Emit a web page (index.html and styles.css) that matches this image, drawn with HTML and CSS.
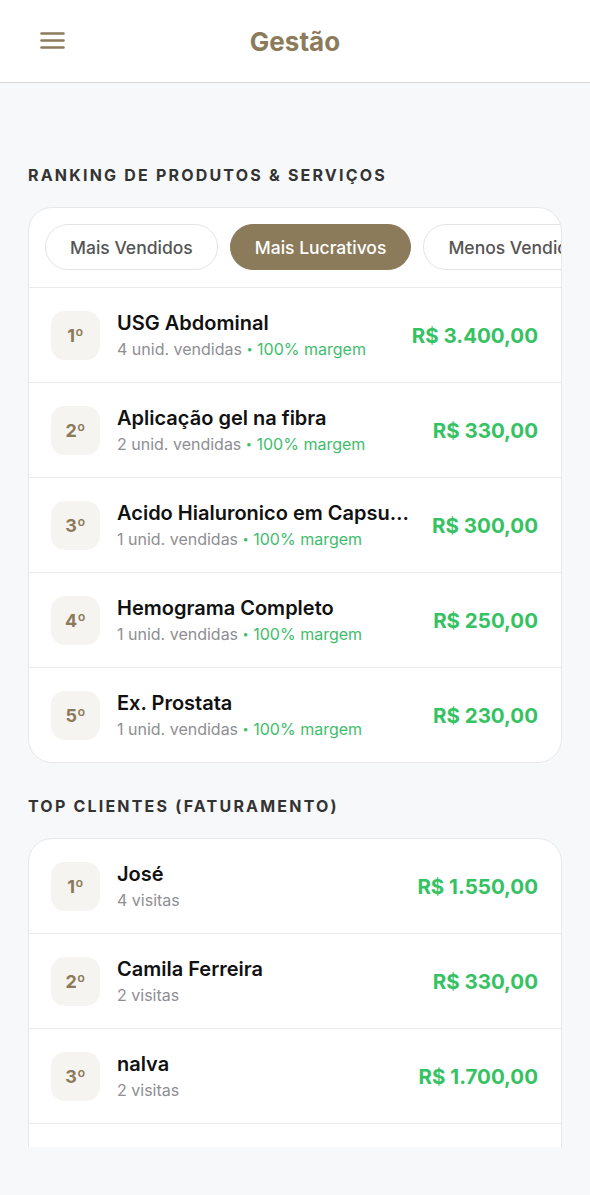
FILE: index.html
```html
<!DOCTYPE html>
<html lang="pt-BR">
	<head>
		<meta charset="utf-8">
		<title>Gestão</title>
		<link rel="stylesheet" href="styles.css">
	</head>
	<body>

		<header class="topbar">
			<button class="menu-btn" aria-label="Menu">
				<svg width="25" height="17" viewBox="0 0 25 17">
					<path d="M1.5 1.5h22M1.5 8.5h22M1.5 15.5h22" stroke="#8c7b5b" stroke-width="2.6" stroke-linecap="round" fill="none"/>
				</svg>
			</button>
			<h1 class="topbar-title">Gestão</h1>
		</header>

		<main class="content">

			<h3 class="section-title">Ranking de Produtos &amp; Serviços</h3>
			<div class="card">
				<div class="tabs">
					<span class="tab">Mais Vendidos</span>
					<span class="tab tab-active">Mais Lucrativos</span>
					<span class="tab">Menos Vendidos</span>
				</div>

				<div class="rank-row">
					<div class="rank-badge">1º</div>
					<div class="rank-info">
						<div class="rank-name">USG Abdominal</div>
						<div class="rank-sub">4 unid. vendidas <span class="rank-green"><span class="dot">•</span> 100% margem</span></div>
					</div>
					<div class="rank-value">R$ 3.400,00</div>
				</div>
				<div class="rank-row">
					<div class="rank-badge">2º</div>
					<div class="rank-info">
						<div class="rank-name">Aplicação gel na fibra</div>
						<div class="rank-sub">2 unid. vendidas <span class="rank-green"><span class="dot">•</span> 100% margem</span></div>
					</div>
					<div class="rank-value">R$ 330,00</div>
				</div>
				<div class="rank-row">
					<div class="rank-badge">3º</div>
					<div class="rank-info">
						<div class="rank-name">Acido Hialuronico em Capsulas</div>
						<div class="rank-sub">1 unid. vendidas <span class="rank-green"><span class="dot">•</span> 100% margem</span></div>
					</div>
					<div class="rank-value">R$ 300,00</div>
				</div>
				<div class="rank-row">
					<div class="rank-badge">4º</div>
					<div class="rank-info">
						<div class="rank-name">Hemograma Completo</div>
						<div class="rank-sub">1 unid. vendidas <span class="rank-green"><span class="dot">•</span> 100% margem</span></div>
					</div>
					<div class="rank-value">R$ 250,00</div>
				</div>
				<div class="rank-row">
					<div class="rank-badge">5º</div>
					<div class="rank-info">
						<div class="rank-name">Ex. Prostata</div>
						<div class="rank-sub">1 unid. vendidas <span class="rank-green"><span class="dot">•</span> 100% margem</span></div>
					</div>
					<div class="rank-value">R$ 230,00</div>
				</div>
			</div>

			<h3 class="section-title section-title-second">Top Clientes (Faturamento)</h3>
			<div class="card">
				<div class="rank-row rank-row-first">
					<div class="rank-badge">1º</div>
					<div class="rank-info">
						<div class="rank-name">José</div>
						<div class="rank-sub">4 visitas</div>
					</div>
					<div class="rank-value">R$ 1.550,00</div>
				</div>
				<div class="rank-row">
					<div class="rank-badge">2º</div>
					<div class="rank-info">
						<div class="rank-name">Camila Ferreira</div>
						<div class="rank-sub">2 visitas</div>
					</div>
					<div class="rank-value">R$ 330,00</div>
				</div>
				<div class="rank-row">
					<div class="rank-badge">3º</div>
					<div class="rank-info">
						<div class="rank-name">nalva</div>
						<div class="rank-sub">2 visitas</div>
					</div>
					<div class="rank-value">R$ 1.700,00</div>
				</div>
				<div class="rank-row">
					<div class="rank-badge">4º</div>
					<div class="rank-info"></div>
				</div>
			</div>

		</main>

		<div class="bottom-space"></div>

	</body>
</html>
```

FILE: styles.css
```css
* {
	box-sizing: border-box;
}

body {
	margin: 0;
	background: #f7f8fa;
	font-family: "Inter", "Liberation Sans", sans-serif;
	color: #111;
}

.topbar {
	height: 83px;
	background: #fff;
	border-bottom: 1px solid #d6d6d6;
	display: flex;
	align-items: center;
	justify-content: center;
	position: relative;
}

.menu-btn {
	position: absolute;
	left: 40px;
	top: 32px;
	padding: 0;
	border: none;
	background: none;
	line-height: 0;
}

.topbar-title {
	margin: 0;
	font-size: 26px;
	font-weight: 700;
	color: #8c7b5b;
}

.content {
	height: 1064px;
	overflow: hidden;
	padding: 82px 28px 0 28px;
}

.section-title {
	margin: 0 0 22px 0;
	font-size: 16px;
	line-height: 20px;
	font-weight: 700;
	letter-spacing: 2.2px;
	text-transform: uppercase;
	color: #333;
}

.section-title-second {
	margin-top: 33px;
}

.card {
	background: #fff;
	border: 1px solid #e8e8eb;
	border-radius: 24px;
	overflow: hidden;
}

.tabs {
	display: flex;
	gap: 12px;
	padding: 16px 0 17px 16px;
	white-space: nowrap;
	overflow: hidden;
}

.tab {
	flex: none;
	height: 46px;
	padding: 0 24px;
	display: flex;
	align-items: center;
	border: 1px solid #e3e3e3;
	border-radius: 23px;
	font-size: 17.5px;
	font-weight: 500;
	color: #555;
}

.tab-active {
	background: #8c7b5b;
	border-color: #8c7b5b;
	color: #fff;
}

.rank-row {
	height: 95px;
	display: flex;
	align-items: center;
	padding: 0 23px 0 22px;
	border-top: 1px solid #ebebeb;
}

.rank-row-first {
	border-top: none;
	height: 94px;
}

.rank-badge {
	flex: none;
	width: 49px;
	height: 49px;
	border-radius: 14px;
	background: #f6f4f1;
	display: flex;
	align-items: center;
	justify-content: center;
	font-size: 18px;
	font-weight: 700;
	color: #8c7b5b;
}

.rank-info {
	flex: 1;
	min-width: 0;
	margin-left: 17px;
	margin-right: 18px;
}

.rank-name {
	font-size: 20px;
	line-height: 25px;
	font-weight: 600;
	white-space: nowrap;
	overflow: hidden;
	text-overflow: ellipsis;
}

.rank-sub {
	margin-top: 3px;
	font-size: 16px;
	line-height: 20px;
	color: #8e8e93;
	white-space: nowrap;
}

.rank-green {
	color: #3fbd6c;
}

.dot {
	font-size: 11px;
	vertical-align: 2px;
}

.rank-value {
	flex: none;
	font-size: 20.5px;
	font-weight: 700;
	color: #34c262;
}

.bottom-space {
	height: 48px;
	background: #f7f8fa;
}
```
